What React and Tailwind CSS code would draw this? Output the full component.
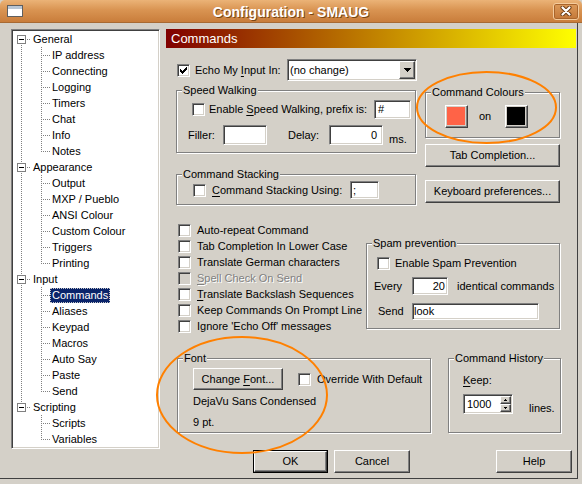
import React from "react";

const SUNKEN =
  "border border-t-[#808080] border-l-[#808080] border-b-white border-r-white shadow-[inset_1px_1px_0_#404040,inset_-1px_-1px_0_#d4d0c8]";
const RAISED =
  "border border-t-white border-l-white border-b-[#404040] border-r-[#404040] shadow-[inset_-1px_-1px_0_#808080]";

function Px({ rects, w, h, fill = "#000" }) {
  return (
    <svg width={w} height={h} viewBox={`0 0 ${w} ${h}`} shapeRendering="crispEdges" className="block">
      {rects.map(([x, y, rw, rh], i) => (
        <rect key={i} x={x} y={y} width={rw} height={rh} fill={fill} />
      ))}
    </svg>
  );
}

const CHECK = [
  [6, 0, 1, 1],
  [5, 1, 2, 1],
  [0, 2, 1, 1],
  [4, 2, 3, 1],
  [0, 3, 2, 1],
  [3, 3, 3, 1],
  [0, 4, 5, 1],
  [1, 5, 3, 1],
  [2, 6, 1, 1],
];

function Check({ checked, disabled }) {
  return (
    <span
      className={`inline-flex w-[13px] h-[13px] shrink-0 items-center justify-center ${SUNKEN} ${
        disabled ? "bg-[#d4d0c8]" : "bg-white"
      }`}
    >
      {checked && <Px rects={CHECK} w={7} h={7} />}
    </span>
  );
}

function U({ children }) {
  return <span className="underline underline-offset-[2px] decoration-1">{children}</span>;
}

function Group({ label, className = "", children }) {
  return (
    <div
      className={`relative border border-[#808080] shadow-[inset_1px_1px_0_#fff,1px_1px_0_#fff] ${className}`}
    >
      <span className="absolute left-[5px] top-[-7px] px-[1px] bg-[#d4d0c8] leading-[13px] whitespace-nowrap">
        {label}
      </span>
      {children}
    </div>
  );
}

function Field({ children, className = "" }) {
  return <div className={`${SUNKEN} bg-white flex items-center whitespace-nowrap ${className}`}>{children}</div>;
}

function Btn({ children, className = "" }) {
  return (
    <div className={`${RAISED} bg-[#d4d0c8] flex items-center justify-center whitespace-nowrap ${className}`}>
      <span>{children}</span>
    </div>
  );
}

function Swatch({ color }) {
  return (
    <div className={`${RAISED} w-[23px] h-[23px] p-[1px] pr-[2px] pb-[2px] shrink-0`}>
      <div className="w-full h-full" style={{ background: color }} />
    </div>
  );
}

const TREE = [
  { label: "General", children: ["IP address", "Connecting", "Logging", "Timers", "Chat", "Info", "Notes"] },
  { label: "Appearance", children: ["Output", "MXP / Pueblo", "ANSI Colour", "Custom Colour", "Triggers", "Printing"] },
  { label: "Input", children: ["Commands", "Aliases", "Keypad", "Macros", "Auto Say", "Paste", "Send"] },
  { label: "Scripting", children: ["Scripts", "Variables"] },
];

function dots(list) {
  return list.map(([x, y], i) => <rect key={i} x={x} y={y} width="1" height="1" fill="#808080" />);
}

function RootRow({ label, first, last }) {
  const pts = [];
  if (!first) pts.push([8, 0], [8, 2]);
  if (!last) pts.push([8, 14]);
  pts.push([14, 8], [16, 8]);
  return (
    <div className="flex h-[16px] items-center">
      <svg width="18" height="16" viewBox="0 0 18 16" shapeRendering="crispEdges" className="block shrink-0">
        {dots(pts)}
        <rect x="4.5" y="4.5" width="8" height="8" fill="#fff" stroke="#808080" />
        <rect x="6" y="8" width="5" height="1" fill="#000" />
      </svg>
      <span className="px-[2px] leading-[16px] whitespace-nowrap">{label}</span>
    </div>
  );
}

function ChildRow({ label, groupLast, lastChild, selected }) {
  const pts = [];
  if (!groupLast) for (let y = 0; y < 16; y += 2) pts.push([8, y]);
  for (let y = 0; y <= (lastChild ? 8 : 14); y += 2) pts.push([28, y]);
  pts.push([30, 8], [32, 8], [34, 8], [36, 8]);
  return (
    <div className="flex h-[16px] items-center">
      <svg width="37" height="16" viewBox="0 0 37 16" shapeRendering="crispEdges" className="block shrink-0">
        {dots(pts)}
      </svg>
      <span
        className={`px-[2px] leading-[15px] h-[15px] whitespace-nowrap ${
          selected ? "bg-[#0a246a] text-white outline outline-1 outline-dotted outline-[#c8c8c8] -outline-offset-1" : ""
        }`}
      >
        {label}
      </span>
    </div>
  );
}

function Tree() {
  return (
    <div
      className={`ml-[11px] w-[149px] h-[420px] bg-white shrink-0 pl-[1px] pt-[1px] border border-t-[#808080] border-l-[#808080] border-b-white border-r-white shadow-[inset_1px_1px_0_#404040,inset_-1px_-1px_0_#d4d0c8]`}
    >
      {TREE.map((g, gi) => (
        <React.Fragment key={g.label}>
          <RootRow label={g.label} first={gi === 0} last={gi === TREE.length - 1} />
          {g.children.map((c, ci) => (
            <ChildRow
              key={c}
              label={c}
              groupLast={gi === TREE.length - 1}
              lastChild={ci === g.children.length - 1}
              selected={c === "Commands"}
            />
          ))}
        </React.Fragment>
      ))}
    </div>
  );
}

function CheckRow({ children, disabled }) {
  return (
    <div className="flex h-[16px] items-center">
      <Check disabled={disabled} />
      <span
        className={`ml-[6px] whitespace-nowrap ${
          disabled ? "text-[#808080] [text-shadow:1px_1px_0_#fff]" : ""
        }`}
      >
        {children}
      </span>
    </div>
  );
}

function Panel() {
  return (
    <div className="ml-[6px] w-[410px] flex flex-col">
      <div className="h-[19px] bg-[linear-gradient(to_right,#800000,#ffff00)] text-white text-[13px] leading-[19px] pl-[5px]">
        Commands
      </div>
      <div className="pl-[10px]">
        {/* Row A */}
        <div className="flex">
          <div className="w-[241px] shrink-0">
            <div className="mt-[11px] h-[22px] flex items-center">
              <span className="ml-[1px] flex">
                <Check checked />
              </span>
              <span className="ml-[5px] w-[92px] whitespace-nowrap">
                Echo My <U>I</U>nput In:
              </span>
              <div className={`${SUNKEN} bg-white w-[130px] h-[22px] flex items-center`}>
                <span className="pl-[2px] flex-1 whitespace-nowrap">(no change)</span>
                <div className="py-[1px] pr-[1px] h-full flex">
                  <div className={`${RAISED} bg-[#d4d0c8] w-[16px] h-full flex items-center justify-center`}>
                    <Px rects={[[0, 0, 7, 1], [1, 1, 5, 1], [2, 2, 3, 1], [3, 3, 1, 1]]} w={7} h={4} />
                  </div>
                </div>
              </div>
            </div>

            <Group label="Speed Walking" className="mt-[9px] w-[240px] pt-[9px] pb-[7px]">
              <div className="flex h-[19px] items-center">
                <span className="ml-[15px] flex">
                  <Check />
                </span>
                <span className="ml-[4px] flex-1 whitespace-nowrap">
                  Enable <U>S</U>peed Walking, prefix is:
                </span>
                <Field className="w-[37px] h-[19px] mr-[4px] pl-[3px]">#</Field>
              </div>
              <div className="flex h-[20px] items-center mt-[6px]">
                <span className="ml-[11px] w-[35px]">Filler:</span>
                <Field className="w-[44px] h-[20px]" />
                <span className="ml-[21px] w-[41px]">Delay:</span>
                <Field className="w-[54px] h-[20px] justify-end pr-[5px]">0</Field>
                <span className="ml-[6px] self-end leading-[13px] mb-[-1px]">ms.</span>
              </div>
            </Group>

            <Group label="Command Stacking" className="mt-[21px] w-[240px] pt-[6px] pb-[5px]">
              <div className="flex h-[18px] items-center">
                <span className="ml-[16px] flex">
                  <Check />
                </span>
                <span className="ml-[6px] w-[138px] whitespace-nowrap">
                  <U>C</U>ommand Stacking Using:
                </span>
                <Field className="w-[29px] h-[18px] pl-[2px]">;</Field>
              </div>
            </Group>
          </div>

          <div className="ml-[8px] w-[135px] shrink-0">
            <Group label="Command Colours" className="mt-[44px] pt-[12px] pb-[9px]">
              <div className="flex h-[23px] items-center">
                <span className="ml-[19px] flex">
                  <Swatch color="#ff6347" />
                </span>
                <span className="ml-[11px] w-[26px]">on</span>
                <Swatch color="#000000" />
              </div>
            </Group>
            <Btn className="mt-[6px] h-[23px]">Tab Completion...</Btn>
            <Btn className="mt-[13px] h-[23px]">Keyboard preferences...</Btn>
          </div>
        </div>

        {/* Row B */}
        <div className="flex">
          <div className="w-[190px] shrink-0 mt-[17px] pl-[2px]">
            <CheckRow>Auto-repeat Command</CheckRow>
            <CheckRow>Tab Completion In Lower Case</CheckRow>
            <CheckRow>Translate German characters</CheckRow>
            <CheckRow disabled>
              <U>S</U>pell Check On Send
            </CheckRow>
            <CheckRow>
              <U>T</U>ranslate Backslash Sequences
            </CheckRow>
            <CheckRow>Keep Commands On Prompt Line</CheckRow>
            <CheckRow>Ignore 'Echo Off' messages</CheckRow>
          </div>
          <Group label="Spam prevention" className="mt-[38px] w-[194px] self-start pt-[13px] pb-[8px]">
            <div className="flex h-[13px] items-center">
              <span className="ml-[10px] flex">
                <Check />
              </span>
              <span className="ml-[5px] whitespace-nowrap">Enable Spam Prevention</span>
            </div>
            <div className="flex h-[18px] items-center mt-[7px]">
              <span className="ml-[7px] w-[38px]">Every</span>
              <Field className="w-[36px] h-[18px] justify-end pr-[2px]">20</Field>
              <span className="ml-[9px] whitespace-nowrap">identical commands</span>
            </div>
            <div className="flex h-[17px] items-center mt-[8px]">
              <span className="ml-[11px] w-[34px]">Send</span>
              <Field className="w-[127px] h-[17px] pl-[1px]">look</Field>
            </div>
          </Group>
        </div>

        {/* Row C */}
        <div className="flex mt-[24px]">
          <Group label="Font" className="ml-[1px] w-[254px] pt-[9px] pb-[3px]">
            <div className="flex h-[22px] items-center">
              <Btn className="ml-[15px] w-[90px] h-[22px]">
                Change <U>F</U>ont...
              </Btn>
              <span className="ml-[15px] flex">
                <Check />
              </span>
              <span className="ml-[6px] whitespace-nowrap">Override With Default</span>
            </div>
            <div className="mt-[4px] ml-[15px] leading-[14px]">DejaVu Sans Condensed</div>
            <div className="mt-[7px] ml-[15px] leading-[14px]">9 pt.</div>
          </Group>
          <Group label="Command History" className="ml-[17px] w-[113px] pt-[14px] pb-[18px]">
            <div className="ml-[14px] leading-[14px]">
              <U>K</U>eep:
            </div>
            <div className="flex mt-[7px] h-[20px]">
              <div className={`${SUNKEN} bg-white ml-[14px] w-[50px] h-[20px] flex items-center`}>
                <span className="pl-[3px] flex-1">1000</span>
                <div className="flex flex-col h-full py-[1px] pr-[1px]">
                  <div className={`${RAISED} bg-[#d4d0c8] w-[11px] flex-1 flex items-center justify-center`}>
                    <Px rects={[[1, 0, 1, 1], [0, 1, 3, 1]]} w={3} h={2} />
                  </div>
                  <div className={`${RAISED} bg-[#d4d0c8] w-[11px] flex-1 flex items-center justify-center`}>
                    <Px rects={[[0, 0, 3, 1], [1, 1, 1, 1]]} w={3} h={2} />
                  </div>
                </div>
              </div>
              <span className="ml-[16px] self-end leading-[14px] mb-[-1px]">lines.</span>
            </div>
          </Group>
        </div>
      </div>
    </div>
  );
}

function TitleBar() {
  return (
    <div className="h-[23px] grid grid-cols-[1fr_auto_1fr] items-center rounded-t-[5px] bg-[linear-gradient(to_bottom,#ebb377,#d99452_45%,#c97d3b)] border-b border-[#a86a33]">
      <div className="pl-[7px] flex">
        <svg width="16" height="12" viewBox="0 0 16 12" shapeRendering="crispEdges" className="block">
          <rect x="0.5" y="0.5" width="15" height="11" fill="#ffffff" stroke="#5f5f5f" />
          <rect x="1" y="1" width="14" height="3" fill="#b9c6d4" />
        </svg>
      </div>
      <div className="text-white font-bold text-[14px] leading-[16px] [text-shadow:1px_1px_0_#7a4614] whitespace-nowrap pt-[1px]">
        Configuration - SMAUG
      </div>
      <div className="flex justify-end pr-[3px]">
        <div className="w-[26px] h-[17px] rounded-[3px] border border-[#f4cb9c] bg-[linear-gradient(to_bottom,#dc9a5a,#c47838)] shadow-[inset_0_0_0_1px_#a9652c] flex items-center justify-center">
          <svg width="12" height="10" viewBox="0 0 12 10" className="block">
            <path d="M2.5 1.5 L9.5 8.5 M9.5 1.5 L2.5 8.5" stroke="#6a3a12" strokeWidth="4" strokeLinecap="round" />
            <path d="M2.5 1.5 L9.5 8.5 M9.5 1.5 L2.5 8.5" stroke="#ffffff" strokeWidth="2.2" strokeLinecap="round" />
          </svg>
        </div>
      </div>
    </div>
  );
}

export default function App() {
  return (
    <div className="relative w-[582px] h-[484px] overflow-hidden bg-[#d4d0c8] font-['Liberation_Sans',Arial,sans-serif] text-[11px] leading-[13px] text-black select-none">
      <TitleBar />
      <div className="w-[578px] h-[456px] border-r border-b border-[#404040] flex flex-col">
        <div className="flex pt-[6px]">
          <Tree />
          <Panel />
        </div>
        <div className="flex mt-[1px]">
          <div className="ml-[253px] w-[75px] h-[23px] border border-black">
            <Btn className="h-full">OK</Btn>
          </div>
          <Btn className="ml-[6px] w-[76px] h-[23px]">Cancel</Btn>
          <Btn className="ml-[86px] w-[76px] h-[23px]">Help</Btn>
        </div>
      </div>
      <svg className="absolute inset-0 pointer-events-none" width="582" height="484" viewBox="0 0 582 484">
        <ellipse cx="486.5" cy="107.5" rx="69.5" ry="35.5" fill="none" stroke="#ff8000" strokeWidth="2" />
        <ellipse cx="242" cy="395" rx="85" ry="58" fill="none" stroke="#ff8000" strokeWidth="2" />
      </svg>
    </div>
  );
}
